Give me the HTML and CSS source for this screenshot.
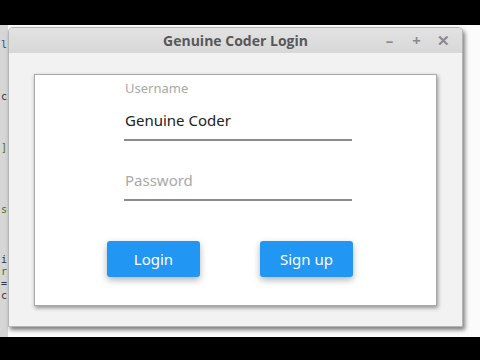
FILE: index.html
```html
<!DOCTYPE html>
<html>
<head>
<meta charset="utf-8">
<link rel="stylesheet" href="styles.css">
</head>
<body>
<div class="bar"></div>
<div class="stage">
  <div class="editor">
    <div class="ln l1 blue">l</div>
    <div class="ln l2">c</div>
    <div class="ln l3 green">]</div>
    <div class="ln l4 green">s</div>
    <div class="ln l5">i</div>
    <div class="ln green">r</div>
    <div class="ln">=</div>
    <div class="ln">c</div>
  </div>
  <div class="window">
    <div class="titlebar">
      <span class="title">Genuine Coder Login</span>
      <div class="controls">
        <span class="ctl">&#8211;</span>
        <span class="ctl">+</span>
        <span class="ctl">&#10005;</span>
      </div>
    </div>
    <div class="content">
      <div class="card">
        <div class="form">
          <div class="label">Username</div>
          <div class="field">Genuine Coder</div>
          <div class="field pw placeholder">Password</div>
        </div>
        <div class="actions">
          <button class="btn">Login</button>
          <button class="btn">Sign up</button>
        </div>
      </div>
    </div>
  </div>
</div>
<div class="bar bottom"></div>
</body>
</html>
```
FILE: styles.css
```css
html, body {
  margin: 0;
  padding: 0;
  background: #000;
  width: 480px;
  height: 360px;
  overflow: hidden;
  font-family: "Noto Sans", "Open Sans", sans-serif;
}
.bar { height: 25px; background: #000; }
.bar.bottom { height: 23px; }
.stage {
  height: 312px;
  background: #fbfbfb;
  display: flex;
  align-items: flex-start;
}
.editor {
  width: 8px;
  height: 312px;
  background: #d6d6d6;
  overflow: hidden;
  font-family: "DejaVu Sans Mono", monospace;
  font-size: 10px;
  color: #333;
  flex: none;
  text-align: right;
}
.ln { line-height: 12px; height: 12px; white-space: nowrap; padding-right: 1px; }
.blue { color: #2c4a8a; }
.green { color: #4d6a1c; }
.l1 { margin-top: 14px; }
.l2 { margin-top: 40px; }
.l3 { margin-top: 39px; }
.l4 { margin-top: 50px; }
.l5 { margin-top: 38px; }
.window {
  width: 455px;
  height: 300px;
  margin-top: 2px;
  background: #f2f2f2;
  border: 1px solid #b5b5b5;
  box-sizing: border-box;
  border-radius: 5px 5px 0 0;
  box-shadow: 2px 3px 4px rgba(0,0,0,0.5);
  display: flex;
  flex-direction: column;
  flex: none;
}
.titlebar {
  height: 25px;
  background: linear-gradient(#e2e2e2, #d8d8d8);
  border-radius: 4px 4px 0 0;
  display: flex;
  align-items: center;
  justify-content: center;
  position: relative;
}
.title {
  font-family: "Open Sans", "Noto Sans", sans-serif;
  font-weight: bold;
  font-size: 14px;
  color: #585858;
}
.controls {
  position: absolute;
  right: 11px;
  top: 3px;
  display: flex;
  gap: 12px;
}
.ctl {
  width: 15px;
  text-align: center;
  font-size: 15px;
  font-weight: bold;
  color: #8a8a8a;
  line-height: 18px;
}
.content {
  flex: 1;
  padding: 21px 25px 20px 25px;
}
.card {
  background: #fff;
  height: 232px;
  box-sizing: border-box;
  border: 1px solid #a9a9a9;
  box-shadow: 1px 2px 4px rgba(0,0,0,0.4);
  padding: 5px 0 0 89px;
}
.form { width: 228px; }
.label {
  font-size: 13px;
  line-height: 16px;
  color: #a8a8a8;
  padding-left: 1px;
}
.field {
  font-size: 15px;
  line-height: 20px;
  color: #222;
  padding: 14px 0 9px 1px;
  border-bottom: 2px solid #8c8c8c;
}
.field.pw { padding-top: 29px; }
.placeholder { color: #a9a9a9; }
.actions {
  display: flex;
  gap: 60px;
  margin: 40px 0 0 -17px;
}
.btn {
  width: 93px;
  height: 36px;
  border: none;
  border-radius: 3px;
  background: #2196f3;
  color: #fff;
  font-family: "Noto Sans", "Open Sans", sans-serif;
  font-size: 15px;
  box-shadow: 0 3px 7px rgba(0,0,0,0.3);
  padding: 0;
}
```
